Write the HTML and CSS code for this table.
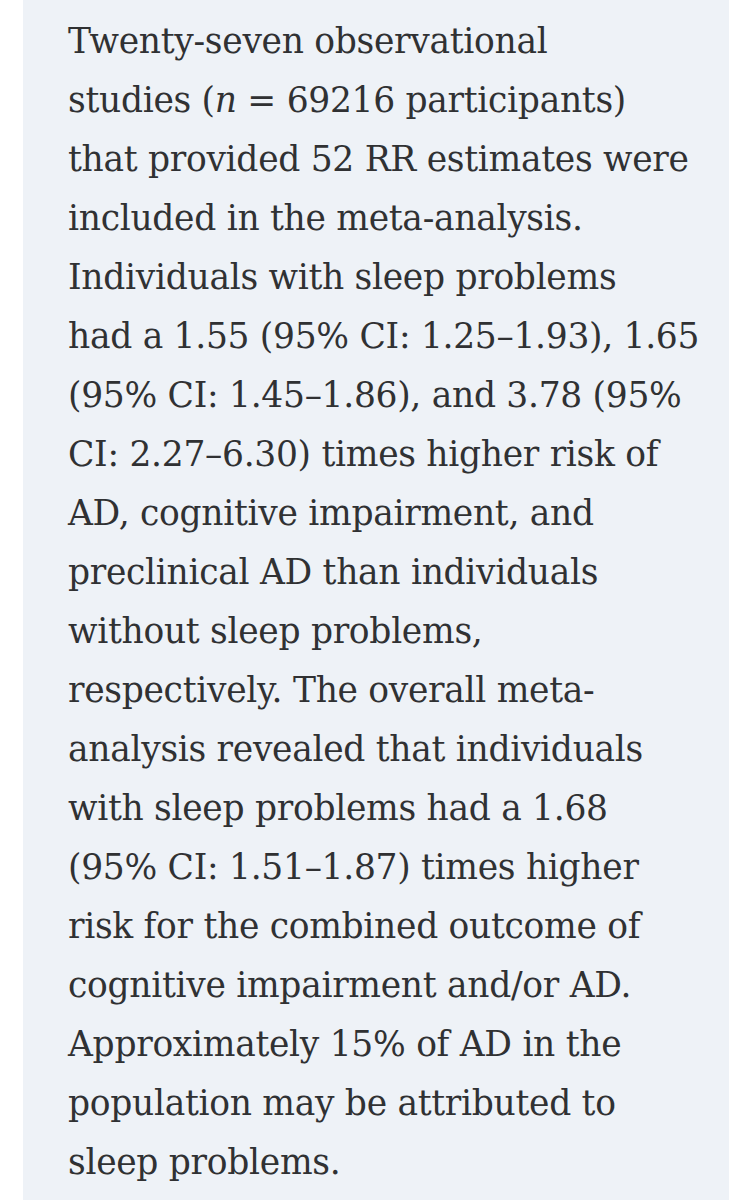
FILE: index.html
```html
<!DOCTYPE html>
<html lang="en">
<head>
<meta charset="utf-8">
<title>Abstract</title>
<link rel="stylesheet" href="styles.css">
</head>
<body>
<div class="panel">
<p class="abstract">Twenty-seven observational<br>
studies (<i>n</i> = 69216 participants)<br>
that provided 52 RR estimates were<br>
included in the meta-analysis.<br>
Individuals with sleep problems<br>
had a 1.55 (95% CI: 1.25–1.93), 1.65<br>
(95% CI: 1.45–1.86), and 3.78 (95%<br>
CI: 2.27–6.30) times higher risk of<br>
AD, cognitive impairment, and<br>
preclinical AD than individuals<br>
without sleep problems,<br>
respectively. The overall meta-<br>
analysis revealed that individuals<br>
with sleep problems had a 1.68<br>
(95% CI: 1.51–1.87) times higher<br>
risk for the combined outcome of<br>
cognitive impairment and/or AD.<br>
Approximately 15% of AD in the<br>
population may be attributed to<br>
sleep problems.</p>
</div>
</body>
</html>
```

FILE: styles.css
```css
html, body {
  margin: 0;
  padding: 0;
  background: #ffffff;
}
body {
  height: 1200px;
  overflow: hidden;
}
.panel {
  margin-left: 23px;
  width: 706px;
  min-height: 1200px;
  background: #eef2f7;
  box-sizing: border-box;
  padding: 12px 0 0 45px;
}
.abstract {
  margin: 0;
  font-family: "DejaVu Serif", "Liberation Serif", serif;
  font-size: 34.5px;
  letter-spacing: -0.3px;
  line-height: 59px;
  color: #303133;
  white-space: nowrap;
}
.abstract i {
  font-style: italic;
}
```
